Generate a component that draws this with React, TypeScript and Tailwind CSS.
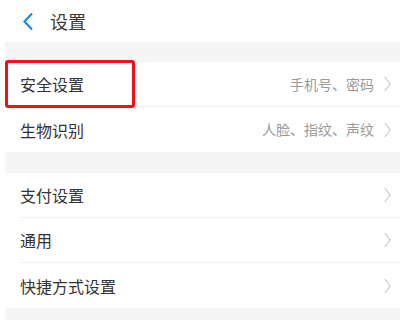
import React from 'react';

type Row = { label: string; hint?: string };

const groupOne: Row[] = [
  { label: '安全设置', hint: '手机号、密码' },
  { label: '生物识别', hint: '人脸、指纹、声纹' },
];

const groupTwo: Row[] = [{ label: '支付设置' }, { label: '通用' }, { label: '快捷方式设置' }];

function Chevron() {
  return (
    <svg width="7" height="16" viewBox="0 0 7 16" fill="none">
      <path d="M0.8 1L6.2 8L0.8 15" stroke="#c4c4c4" strokeWidth="1.1" />
    </svg>
  );
}

function SettingRow({ row, last, highlight }: { row: Row; last: boolean; highlight?: boolean }) {
  return (
    <div className="relative flex h-[45px] items-center pl-[15px]">
      <div
        className={`flex h-full flex-1 items-center pr-[9px] ${last ? '' : 'border-b border-[#efefef]'}`}
      >
        <span className="flex-1 text-[16px] text-[#333333]">{row.label}</span>
        {row.hint && <span className="mr-[10px] text-[14px] text-[#9a9a9a]">{row.hint}</span>}
        <Chevron />
      </div>
      {highlight && (
        <div className="absolute left-0 top-[-2px] h-[48px] w-[130px] rounded-[3px] border-[3px] border-[#f0101a]" />
      )}
    </div>
  );
}

export default function App() {
  return (
    <div
      className="h-[320px] w-[400px] overflow-hidden bg-white pl-[5px]"
      style={{ fontFamily: '"Noto Sans CJK SC", "Noto Sans", sans-serif' }}
    >
      <div className="flex h-[42px] items-center">
        <svg className="ml-[17px]" width="12" height="19" viewBox="0 0 12 19" fill="none">
          <path d="M10 1.5L2.5 9.5L10 17.5" stroke="#1e88e5" strokeWidth="2.2" />
        </svg>
        <span className="ml-[16px] text-[18px] text-[#3a3a3a]">设置</span>
      </div>
      <div className="h-[20px] bg-[#f5f5f5]" />
      {groupOne.map((row, i) => (
        <SettingRow key={row.label} row={row} last={i === groupOne.length - 1} highlight={i === 0} />
      ))}
      <div className="h-[21px] bg-[#f5f5f5]" />
      {groupTwo.map((row, i) => (
        <SettingRow key={row.label} row={row} last={i === groupTwo.length - 1} />
      ))}
      <div className="h-[20px] bg-[#f5f5f5]" />
    </div>
  );
}
